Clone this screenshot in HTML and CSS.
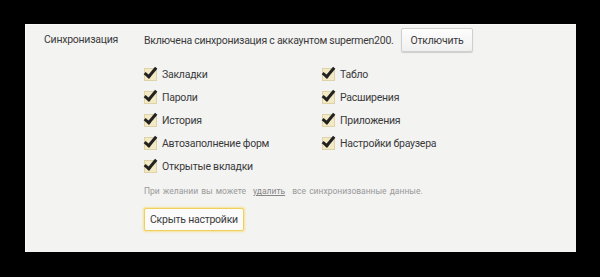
FILE: index.html
```html
<!DOCTYPE html>
<html lang="ru">
<head>
    <meta charset="UTF-8">
    <title>Синхронизация</title>
    <link rel="stylesheet" href="styles.css">
</head>
<body>

<div class="panel">
    <div class="label">Синхронизация</div>
    <div class="content">
        <div class="status">
            <span>Включена синхронизация с аккаунтом supermen200.</span>
            <button class="btn">Отключить</button>
        </div>

        <div class="options">
            <div class="col">
                <label class="opt"><span class="box"></span>Закладки</label>
                <label class="opt"><span class="box"></span>Пароли</label>
                <label class="opt"><span class="box"></span>История</label>
                <label class="opt"><span class="box"></span>Автозаполнение форм</label>
                <label class="opt"><span class="box"></span>Открытые вкладки</label>
            </div>
            <div class="col">
                <label class="opt"><span class="box"></span>Табло</label>
                <label class="opt"><span class="box"></span>Расширения</label>
                <label class="opt"><span class="box"></span>Приложения</label>
                <label class="opt"><span class="box"></span>Настройки браузера</label>
            </div>
        </div>

        <p class="note">При желании вы можете <a href="#">удалить</a> все синхронизованные данные.</p>

        <button class="btn btn-yellow">Скрыть настройки</button>
    </div>
</div>

</body>
</html>
```

FILE: styles.css
```css
body {
    margin: 0;
    width: 600px;
    height: 277px;
    background-color: #000;
    font-family: Roboto, "Noto Sans", sans-serif;
    font-size: 10.5px;
    letter-spacing: -0.25px;
    color: #3a3a3a;
    overflow: hidden;
}
.panel {
    box-sizing: border-box;
    margin: 24px 0 0 25px;
    width: 551px;
    height: 228px;
    background-color: #f3f3f2;
    border-top: 1px solid #fafafa;
    border-left: 1px solid #fafafa;
    display: flex;
    padding: 3px 0 0 18px;
}
.label {
    width: 100px;
    line-height: 24px;
}
.content {
    display: flex;
    flex-direction: column;
    align-items: flex-start;
}
.status {
    display: flex;
    align-items: center;
    gap: 7px;
}
.btn {
    font-family: inherit;
    font-size: 10.5px;
    letter-spacing: -0.25px;
    color: #3a3a3a;
    padding: 0 9px;
    height: 24px;
    background: linear-gradient(#fdfdfd, #f0f0f0);
    border: 1px solid #cfcfcf;
    border-radius: 2px;
    box-shadow: 0 1px 1px rgba(0, 0, 0, 0.15);
}
.options {
    display: flex;
    margin-top: 11px;
}
.col {
    width: 178px;
    display: flex;
    flex-direction: column;
}
.opt {
    display: flex;
    align-items: center;
    height: 23px;
}
.box {
    position: relative;
    width: 11px;
    height: 11px;
    margin-right: 5px;
    background-color: #f3e9c4;
    border: 1px solid #ddd2a8;
}
.box::after {
    content: "";
    position: absolute;
    left: 2px;
    top: -4px;
    width: 4px;
    height: 10px;
    border-right: 3px solid #222;
    border-bottom: 3px solid #222;
    transform: rotate(40deg);
}
.note {
    margin: 8px 0 0;
    font-size: 8.5px;
    letter-spacing: 0;
    color: #999;
    word-spacing: 1px;
}
.note a {
    color: #888;
    margin: 0 4px;
}
.btn-yellow {
    margin-top: 12px;
    height: 23px;
    padding: 0 5px;
    background: #fbfbfb;
    border: 1px solid #f0cf5c;
    box-shadow: 0 0 2px 1px rgba(250, 215, 90, 0.6);
}
```
